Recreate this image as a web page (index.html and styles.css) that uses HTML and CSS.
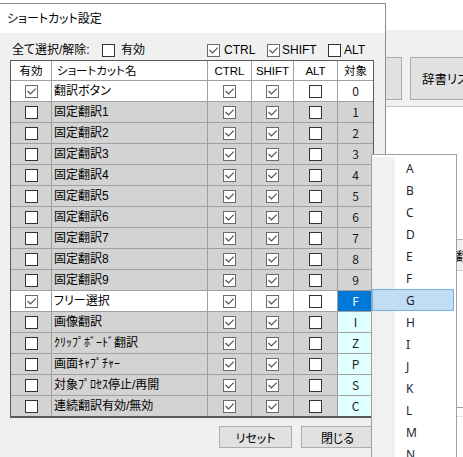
FILE: index.html
```html
<!DOCTYPE html>
<html lang="ja">
<head>
<meta charset="utf-8">
<title>ショートカット設定</title>
<link rel="stylesheet" href="styles.css">
</head>
<body>
<div class="screen">
  <div class="bgwin">
    <div class="bg-top"></div>
    <div class="bg-toolbar">
      <div class="bg-btn b1">翻訳へ</div>
      <div class="bg-btn b2">辞書リスト</div>
    </div>
    <div class="bg-gap1"></div>
    <div class="bg-panel">翻訳</div>
    <div class="bg-gap2"></div>
    <div class="bg-line"></div>
  </div>

  <div class="dialog">
    <div class="titlebar">ショートカット設定</div>
    <div class="dlg-body">
      <div class="toprow">
        <span class="lbl">全て選択/解除:</span>
        <span class="grp g1"><span class="cb"></span><span class="glbl">有効</span></span>
        <span class="grp g2"><span class="cb on"></span><span class="glbl">CTRL</span></span>
        <span class="grp g3"><span class="cb on"></span><span class="glbl">SHIFT</span></span>
        <span class="grp g4"><span class="cb"></span><span class="glbl">ALT</span></span>
      </div>

      <div class="grid">
        <div class="row hd">
          <div class="c">有効</div><div class="c n hn">ショートカット名</div><div class="c">CTRL</div><div class="c">SHIFT</div><div class="c">ALT</div><div class="c">対象</div>
        </div>
        <div class="row w">
          <div class="c"><span class="cb on"></span></div><div class="c n">翻訳ボタン</div><div class="c"><span class="cb on"></span></div><div class="c"><span class="cb on"></span></div><div class="c"><span class="cb"></span></div><div class="c k">0</div>
        </div>
        <div class="row">
          <div class="c"><span class="cb"></span></div><div class="c n">固定翻訳1</div><div class="c"><span class="cb on"></span></div><div class="c"><span class="cb on"></span></div><div class="c"><span class="cb"></span></div><div class="c k">1</div>
        </div>
        <div class="row">
          <div class="c"><span class="cb"></span></div><div class="c n">固定翻訳2</div><div class="c"><span class="cb on"></span></div><div class="c"><span class="cb on"></span></div><div class="c"><span class="cb"></span></div><div class="c k">2</div>
        </div>
        <div class="row">
          <div class="c"><span class="cb"></span></div><div class="c n">固定翻訳3</div><div class="c"><span class="cb on"></span></div><div class="c"><span class="cb on"></span></div><div class="c"><span class="cb"></span></div><div class="c k">3</div>
        </div>
        <div class="row">
          <div class="c"><span class="cb"></span></div><div class="c n">固定翻訳4</div><div class="c"><span class="cb on"></span></div><div class="c"><span class="cb on"></span></div><div class="c"><span class="cb"></span></div><div class="c k">4</div>
        </div>
        <div class="row">
          <div class="c"><span class="cb"></span></div><div class="c n">固定翻訳5</div><div class="c"><span class="cb on"></span></div><div class="c"><span class="cb on"></span></div><div class="c"><span class="cb"></span></div><div class="c k">5</div>
        </div>
        <div class="row">
          <div class="c"><span class="cb"></span></div><div class="c n">固定翻訳6</div><div class="c"><span class="cb on"></span></div><div class="c"><span class="cb on"></span></div><div class="c"><span class="cb"></span></div><div class="c k">6</div>
        </div>
        <div class="row">
          <div class="c"><span class="cb"></span></div><div class="c n">固定翻訳7</div><div class="c"><span class="cb on"></span></div><div class="c"><span class="cb on"></span></div><div class="c"><span class="cb"></span></div><div class="c k">7</div>
        </div>
        <div class="row">
          <div class="c"><span class="cb"></span></div><div class="c n">固定翻訳8</div><div class="c"><span class="cb on"></span></div><div class="c"><span class="cb on"></span></div><div class="c"><span class="cb"></span></div><div class="c k">8</div>
        </div>
        <div class="row">
          <div class="c"><span class="cb"></span></div><div class="c n">固定翻訳9</div><div class="c"><span class="cb on"></span></div><div class="c"><span class="cb on"></span></div><div class="c"><span class="cb"></span></div><div class="c k">9</div>
        </div>
        <div class="row w">
          <div class="c"><span class="cb on"></span></div><div class="c n">フリー選択</div><div class="c"><span class="cb on"></span></div><div class="c"><span class="cb on"></span></div><div class="c"><span class="cb"></span></div><div class="c k sel">F</div>
        </div>
        <div class="row">
          <div class="c"><span class="cb"></span></div><div class="c n">画像翻訳</div><div class="c"><span class="cb on"></span></div><div class="c"><span class="cb on"></span></div><div class="c"><span class="cb"></span></div><div class="c k cy">I</div>
        </div>
        <div class="row">
          <div class="c"><span class="cb"></span></div><div class="c n">ｸﾘｯﾌﾟﾎﾞｰﾄﾞ翻訳</div><div class="c"><span class="cb on"></span></div><div class="c"><span class="cb on"></span></div><div class="c"><span class="cb"></span></div><div class="c k cy">Z</div>
        </div>
        <div class="row">
          <div class="c"><span class="cb"></span></div><div class="c n">画面ｷｬﾌﾟﾁｬｰ</div><div class="c"><span class="cb on"></span></div><div class="c"><span class="cb on"></span></div><div class="c"><span class="cb"></span></div><div class="c k cy">P</div>
        </div>
        <div class="row">
          <div class="c"><span class="cb"></span></div><div class="c n">対象ﾌﾟﾛｾｽ停止/再開</div><div class="c"><span class="cb on"></span></div><div class="c"><span class="cb on"></span></div><div class="c"><span class="cb"></span></div><div class="c k cy">S</div>
        </div>
        <div class="row">
          <div class="c"><span class="cb"></span></div><div class="c n">連続翻訳有効/無効</div><div class="c"><span class="cb on"></span></div><div class="c"><span class="cb on"></span></div><div class="c"><span class="cb"></span></div><div class="c k cy">C</div>
        </div>
      </div>

      <div class="btnrow">
        <div class="btn">リセット</div>
        <div class="btn">閉じる</div>
      </div>
    </div>
  </div>

  <div class="menu">
    <div class="menu-list">
      <div class="mi">A</div>
      <div class="mi">B</div>
      <div class="mi">C</div>
      <div class="mi">D</div>
      <div class="mi">E</div>
      <div class="mi">F</div>
      <div class="mi hl">G</div>
      <div class="mi">H</div>
      <div class="mi">I</div>
      <div class="mi">J</div>
      <div class="mi">K</div>
      <div class="mi">L</div>
      <div class="mi">M</div>
      <div class="mi">N</div>
    </div>
  </div>
</div>
</body>
</html>
```

FILE: styles.css
```css
* { box-sizing: border-box; }
html, body { margin: 0; padding: 0; }
body {
  width: 463px;
  height: 457px;
  overflow: hidden;
  background: #fff;
  font-family: "Liberation Sans", "Noto Sans CJK JP", sans-serif;
  font-size: 12px;
  color: #000;
  font-feature-settings: "palt";
}
.screen { position: relative; width: 463px; height: 457px; overflow: hidden; }

/* background application window */
.bgwin { width: 463px; height: 457px; background: #fff; }
.bg-top { height: 30px; }
.bg-toolbar {
  height: 77px;
  background: #f0f0f0;
  border-bottom: 1px solid #c8c8c8;
  display: flex;
  gap: 8px;
  padding: 27px 0 0 320px;
}
.bg-btn {
  flex: none;
  height: 43px;
  border: 1px solid #adadad;
  background: #e1e1e1;
  display: flex;
  align-items: center;
  font-family: "Noto Sans CJK JP", sans-serif;
  font-size: 12.5px;
  white-space: nowrap;
  overflow: hidden;
}
.b1 { width: 82px; justify-content: center; }
.b2 { width: 90px; padding-left: 11px; }
.bg-gap1 { height: 132px; }
.bg-panel {
  height: 32px;
  background: #f0f0f0;
  border-top: 1px solid #b4b4b4;
  border-bottom: 1px solid #d0d0d0;
  padding-left: 456px;
  display: flex;
  align-items: center;
  font-family: "Noto Sans CJK JP", sans-serif;
  white-space: nowrap;
  overflow: hidden;
}
.bg-gap2 { height: 136px; }
.bg-line { height: 10px; border-top: 1px solid #a0a0a0; border-bottom: 1px solid #e3e3e3; }

/* dialog */
.dialog {
  position: absolute;
  left: 0;
  top: 3px;
  width: 386px;
  height: 454px;
  border-top: 1px solid #8c8c8c;
  border-right: 1px solid #8c8c8c;
  background: #f0f0f0;
}
.titlebar {
  height: 29px;
  background: #fff;
  padding: 0 0 3px 7px;
  display: flex;
  align-items: center;
  font-family: "Noto Sans CJK JP", sans-serif;
  font-size: 12px;
}
.dlg-body { padding: 11px 0 0 10px; }

.toprow { display: flex; align-items: center; height: 13px; line-height: 13px; white-space: nowrap; }
.lbl { width: 92px; padding-left: 2px; flex: none; }
.grp { display: flex; align-items: center; gap: 4px; flex: none; }
.g1 { width: 105px; gap: 6px; }
.g2 { width: 60px; }
.g3 { width: 61px; gap: 2px; }
.g4 { gap: 3px; }

/* checkbox */
.cb {
  display: block;
  flex: none;
  width: 13px;
  height: 13px;
  border: 1px solid #333;
  background: #fff;
}
.cb.on {
  border-color: #6a6a6a;
  background: #fff url("data:image/svg+xml,%3Csvg xmlns='http://www.w3.org/2000/svg' width='11' height='11'%3E%3Cpath d='M1.5 5 L4.5 8 L9.7 2.6' fill='none' stroke='%23505050' stroke-width='1.1'/%3E%3C/svg%3E") no-repeat 0 0;
}

/* table */
.grid {
  margin-top: 3px;
  width: 364px;
  display: grid;
  grid-template-columns: 40px 155px 43px 41px 43px 35px;
  grid-template-rows: 19px repeat(16, 20px);
  gap: 1px;
  background: #a0a0a0;
  border: 1px solid #5a5a5a;
  border-bottom-width: 2px;
}
.row { display: contents; }
.c {
  display: flex;
  align-items: center;
  justify-content: center;
  background: #d3d3d3;
  white-space: nowrap;
  overflow: hidden;
  line-height: 14px;
  font-size: 12px;
  font-weight: 400;
}
.c.n { justify-content: flex-start; padding-left: 2px; }
.c.k { font-family: "Noto Sans CJK JP", sans-serif; font-size: 12px; color: #1a1a1a; }
.row.hd > .c { background: #fff; font-size: 11.5px; }
.row.hd > .c.hn { padding-left: 5px; }
.row.w > .c { background: #fff; }
.row > .c.sel { background: #0078d7; color: #fff; }
.row > .c.cy { background: #e0ffff; }

/* buttons */
.btnrow { display: flex; justify-content: flex-end; gap: 9px; width: 364px; margin-top: 8px; }
.btn {
  width: 73px;
  height: 22px;
  border: 1px solid #adadad;
  background: #e1e1e1;
  display: flex;
  align-items: center;
  justify-content: center;
  font-family: "Noto Sans CJK JP", sans-serif;
  font-size: 12px;
}

/* dropdown list */
.menu {
  position: absolute;
  left: 371px;
  top: 154px;
  width: 86px;
  height: 320px;
  border: 1px solid #a0a0a0;
  background: #fff;
  padding: 2px 2px 0 0;
}
.menu-list { background: linear-gradient(to right, #f1f1f1 0, #f1f1f1 23px, #fff 23px); }
.mi {
  height: 22px;
  padding-left: 34px;
  display: flex;
  align-items: center;
  font-family: "Noto Sans", "Liberation Sans", sans-serif;
  font-size: 12px;
  color: #1f2433;
}
.mi.hl { background: #c1dcf3; border: 1px solid #7aafe4; padding-left: 33px; }
```
